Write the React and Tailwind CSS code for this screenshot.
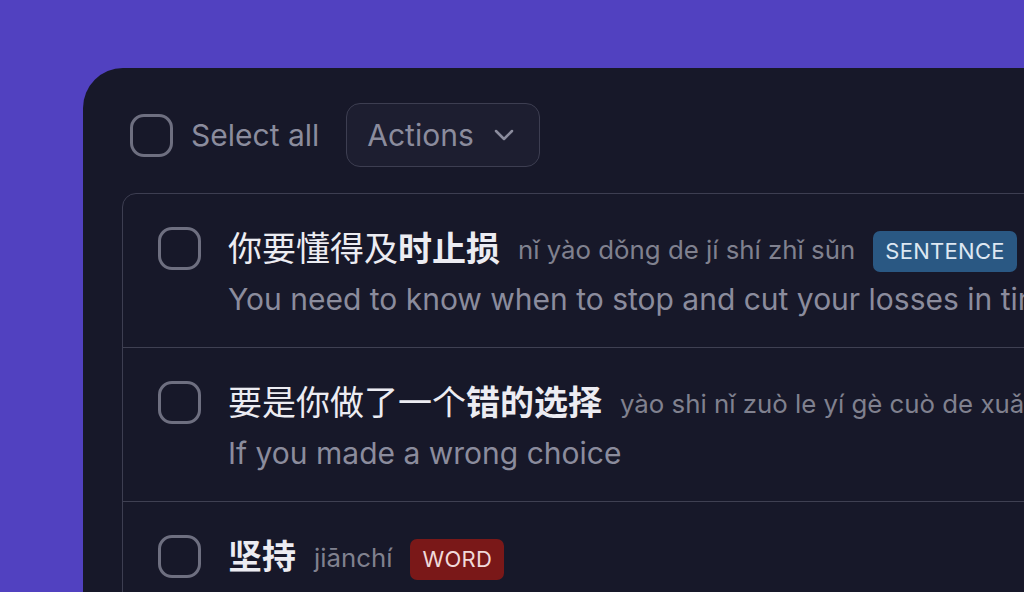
import { useState } from "react";

const cards = [
  {
    id: 1,
    plain: "你要懂得及",
    strong: "时止损",
    pinyin: "nǐ yào dǒng de jí shí zhǐ sǔn",
    kind: "sentence",
    meaning: "You need to know when to stop and cut your losses in time",
  },
  {
    id: 2,
    plain: "要是你做了一个",
    strong: "错的选择",
    pinyin: "yào shi nǐ zuò le yí gè cuò de xuǎn zé",
    kind: "sentence",
    meaning: "If you made a wrong choice",
  },
  {
    id: 3,
    plain: "",
    strong: "坚持",
    pinyin: "jiānchí",
    kind: "word",
    meaning: "To persist; to insist",
  },
];

const latin = { fontFamily: "Inter, 'Noto Sans', sans-serif" };
const hanzi = { fontFamily: "Inter, 'Noto Sans CJK SC', sans-serif" };

function Box({ checked, onChange }) {
  return (
    <button
      type="button"
      onClick={onChange}
      className={`w-[43px] h-[43px] shrink-0 rounded-[14px] border-[3px] ${
        checked ? "border-[#6d5ce0] bg-[#6d5ce0]" : "border-[#6e6f80] bg-transparent"
      }`}
      aria-pressed={checked}
    />
  );
}

function Badge({ kind }) {
  if (kind === "word") {
    return (
      <span className="h-[41px] px-[12px] rounded-[7px] bg-[#7a1818] text-[#f1dada] text-[22px] tracking-[0.3px] flex items-center">
        WORD
      </span>
    );
  }
  return (
    <span className="h-[41px] px-[12px] rounded-[7px] bg-[#2a5883] text-[#dde7f2] text-[22px] tracking-[0.3px] flex items-center">
      SENTENCE
    </span>
  );
}

export default function App() {
  const [selected, setSelected] = useState([]);

  const toggle = (id) =>
    setSelected((prev) => (prev.includes(id) ? prev.filter((x) => x !== id) : [...prev, id]));

  const allOn = selected.length === cards.length;

  return (
    <div className="w-[1024px] h-[592px] overflow-hidden bg-[#5141c0]" style={latin}>
      <div className="ml-[83px] mt-[68px] w-[1000px] h-[600px] bg-[#171829] rounded-tl-[40px] pt-[35px] pl-[39px]">
        <div className="flex items-center pl-2">
          <Box checked={allOn} onChange={() => setSelected(allOn ? [] : cards.map((c) => c.id))} />
          <span className="ml-[18px] text-[30px] text-[#8b8c9d]">Select all</span>
          <button
            type="button"
            className="ml-[27px] h-[64px] w-[194px] pl-[20px] pr-[25px] flex items-center justify-between rounded-[14px] border border-[#3d3e51] bg-[#1d1e30] text-[30px] text-[#8b8c9d]"
          >
            Actions
            <svg width="20" height="12" viewBox="0 0 20 12" fill="none">
              <path d="M2 2l8 8 8-8" stroke="#8b8c9d" strokeWidth="2.5" strokeLinecap="round" strokeLinejoin="round" />
            </svg>
          </button>
        </div>

        <div className="mt-[26px] border border-[#3d3e51] rounded-tl-[14px]">
          {cards.map((c, i) => (
            <div
              key={c.id}
              className={`flex pl-[35px] pt-[33px] pb-[28px] ${i > 0 ? "border-t border-[#3f4052]" : ""}`}
            >
              <Box checked={selected.includes(c.id)} onChange={() => toggle(c.id)} />
              <div className="ml-[27px] min-w-0 -mt-[1px]">
                <div className="flex items-center h-[45px] whitespace-nowrap">
                  <span className="text-[34px] text-[#ececf2]" style={hanzi}>
                    {c.plain}
                    <span className="font-bold">{c.strong}</span>
                  </span>
                  <span className="ml-[18px] mt-[4px] text-[25.8px] text-[#80818f]">{c.pinyin}</span>
                  <span className="ml-[18px] mt-[6px]">
                    <Badge kind={c.kind} />
                  </span>
                </div>
                <div className="mt-[8px] text-[30px] leading-[40px] text-[#8b8c9d] whitespace-nowrap">
                  {c.meaning}
                </div>
              </div>
            </div>
          ))}
        </div>
      </div>
    </div>
  );
}
